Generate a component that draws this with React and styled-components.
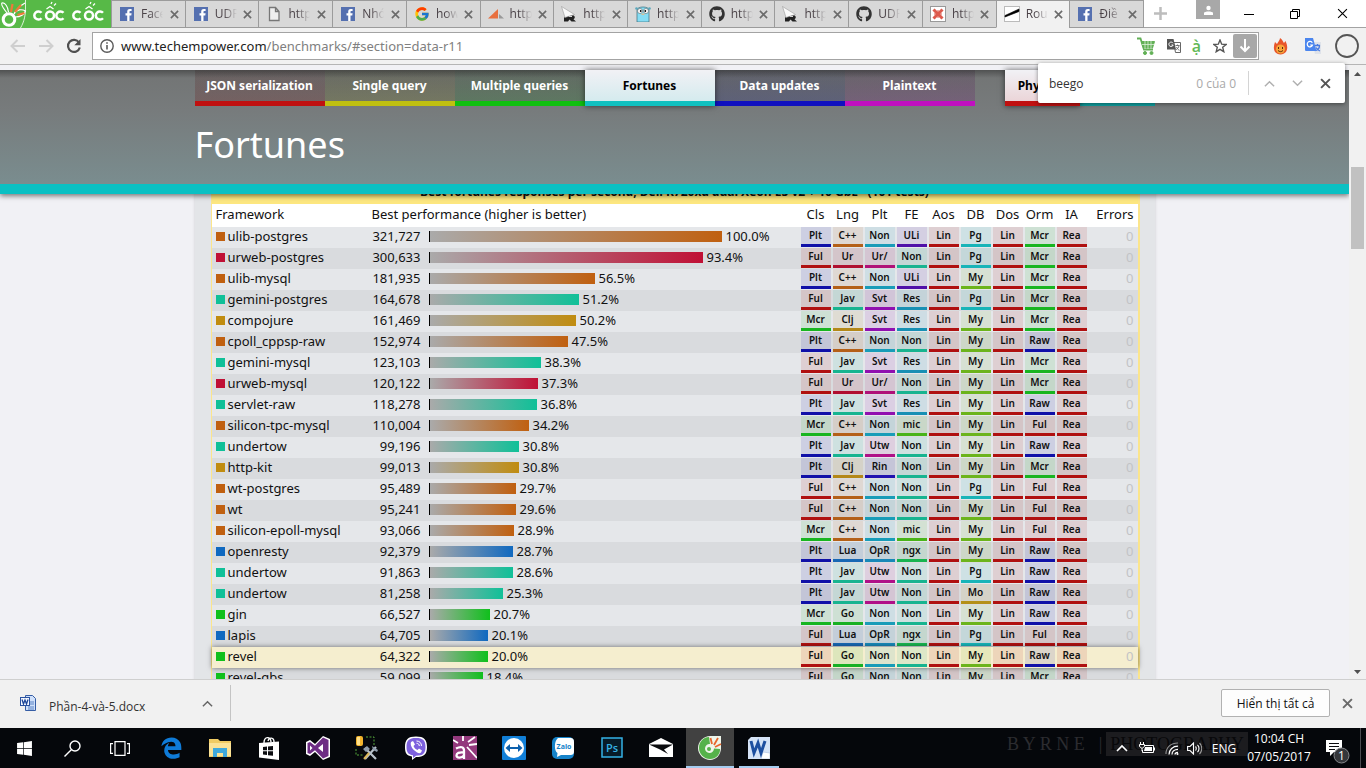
import React from "react";
import styled, { createGlobalStyle, css } from "styled-components";
import { FaGithub, FaWindows } from "react-icons/fa";
import { FcGoogle } from "react-icons/fc";

const UI = `"Open Sans", "Noto Sans", sans-serif`;
const PAGE = `"Noto Sans", "Open Sans", sans-serif`;

const GlobalStyle = createGlobalStyle`
  *, *::before, *::after { box-sizing: border-box; }
  body { margin: 0; overflow: hidden; font-family: ${UI}; }
  button, input { font: inherit; color: inherit; margin: 0; padding: 0; border: 0; background: none; }
  svg { display: block; flex: none; }
  a { text-decoration: none; color: inherit; }
`;

const Desktop = styled.div`
  height: 100vh;
  display: flex;
  flex-direction: column;
  background: #f1f1f1;
`;

/* ---------- tab strip ---------- */

const TabStrip = styled.div`
  display: flex;
  height: 28px;
  flex: none;
  background: #fff;
  box-shadow: inset 0 -1px 0 #a3a3a3;
`;

const Brand = styled.button`
  width: 111px;
  height: 28px;
  flex: none;
  display: block;
  background: #57b947;
`;

const TabList = styled.div`
  flex: 1;
  display: flex;
  min-width: 0;
`;

const Tab = styled.div`
  flex: 1 1 0;
  min-width: 0;
  display: flex;
  align-items: center;
  padding-left: 7px;
  border: solid #9b9b9b;
  border-width: 1px 0 1px 1px;
  background: ${(p) => (p.$active ? "#f1f1f1" : "#d8d8d8")};
  border-bottom-color: ${(p) => (p.$active ? "#f1f1f1" : "#9b9b9b")};
  &:last-child { border-right-width: 1px; }
`;

const TabTitle = styled.span`
  width: 22px;
  margin: 0 5px 0 6px;
  flex: none;
  overflow: hidden;
  white-space: nowrap;
  font-size: 12px;
  line-height: 20px;
  color: #4a4247;
  mask-image: linear-gradient(to right, #000 40%, transparent);
`;

const TabClose = styled.button`
  flex: none;
  width: 12px;
  height: 12px;
  display: grid;
  place-items: center;
`;

const WindowArea = styled.div`
  flex: none;
  width: 222px;
  display: flex;
  justify-content: space-between;
  height: 27px;
`;

const WindowButton = styled.button`
  width: ${(p) => p.$w || 46}px;
  height: 27px;
  display: grid;
  place-items: center;
`;

const ProfileButton = styled.button`
  width: 24px;
  height: 19px;
  margin-right: 6px;
  display: grid;
  place-items: center;
  background: #a8a8a8;
`;

const WindowGroup = styled.div`
  display: flex;
`;

/* ---------- toolbar ---------- */

const Toolbar = styled.div`
  position: relative;
  flex: none;
  display: flex;
  align-items: center;
  height: 37px;
  padding: 0 4px;
  border-bottom: 1px solid #b5b5b5;
  background: #f1f1f1;
`;

const IconButton = styled.button`
  width: 28px;
  height: 28px;
  flex: none;
  display: grid;
  place-items: center;
`;

const AddressBar = styled.div`
  flex: 1;
  min-width: 0;
  display: flex;
  align-items: center;
  height: 28px;
  margin-left: 4px;
  padding: 0 1px 0 7px;
  border: 1px solid #a3a3a3;
  background: #fff;
`;

const Url = styled.div`
  flex: 1;
  padding-left: 7px;
  font-family: ${PAGE};
  font-size: 13px;
  line-height: 20px;
  white-space: nowrap;
  color: #808080;
  b { font-weight: 400; color: #222; }
`;

const ActionButton = styled.button`
  width: ${(p) => p.$w}px;
  height: 24px;
  flex: none;
  display: grid;
  place-items: center;
  font-size: 16px;
  font-weight: 600;
  line-height: 20px;
  color: #62b856;
  border-radius: 2px;
  background: ${(p) => (p.$filled ? "#a8a8a8" : "none")};
`;

const ExtensionButton = styled.button`
  width: 32px;
  height: 28px;
  display: grid;
  place-items: center;
`;

const Extensions = styled.div`
  display: flex;
  align-items: center;
  gap: 1px;
  padding-left: 5px;
`;

const FindBar = styled.form`
  position: absolute;
  right: 21px;
  top: 35px;
  z-index: 5;
  display: flex;
  align-items: center;
  width: 307px;
  height: 40px;
  padding: 0 6px 0 11px;
  border-radius: 2px;
  background: #fff;
  box-shadow: 0 1px 4px rgba(0, 0, 0, 0.45);
  font-size: 12px;
`;

const FindInput = styled.input`
  flex: 1;
  min-width: 0;
  color: #333;
  outline: none;
`;

const FindCount = styled.span`
  color: #a9a9a9;
  padding-right: 12px;
`;

const FindDivider = styled.i`
  width: 1px;
  height: 24px;
  margin-right: 6px;
  background: #d4d4d4;
`;

/* ---------- benchmark page ---------- */

const Viewport = styled.div`
  flex: 1;
  min-height: 0;
  display: flex;
  overflow: hidden;
`;

const Page = styled.div`
  flex: 1;
  min-width: 0;
  overflow: hidden;
  background: #f1f1f5;
  font-family: ${PAGE};
  color: #111;
`;

const PageHeader = styled.header`
  position: relative;
  z-index: 2;
  height: 129px;
  border-top: 5px solid #f1f1f5;
  border-bottom: 10px solid #0bc0c3;
  background: linear-gradient(#727474, #777b7c 35%, #7a8d8f);
  box-shadow: 0 2px 5px rgba(0, 0, 0, 0.5);
  &::before {
    content: "";
    position: absolute;
    inset: 0 0 auto;
    height: 8px;
    z-index: 1;
    background: linear-gradient(rgba(0, 0, 0, 0.3), rgba(0, 0, 0, 0));
  }
`;

const Centered = styled.div`
  width: 960px;
  max-width: 100%;
  margin: 0 auto;
`;

const TestNav = styled.nav`
  display: flex;
`;

const TestTab = styled.a`
  position: relative;
  flex: 0 0 ${(p) => p.$w || 130}px;
  height: 36px;
  overflow: hidden;
  text-align: center;
  font-size: 12px;
  font-weight: 700;
  line-height: 31px;
  color: #fff;
  white-space: nowrap;
  border-bottom: 5px solid ${(p) => p.$c};
  background: linear-gradient(${(p) => p.$c}08, ${(p) => p.$c}20), linear-gradient(#0000001c, #0000001c);
  background-clip: padding-box;
  margin-left: ${(p) => (p.$gap ? 30 : 0)}px;
  ${(p) =>
    p.$active &&
    css`
      z-index: 2;
      color: #000;
      background: linear-gradient(${p.$c}00, ${p.$c}20), #f1f1f5;
      box-shadow: 0 0 6px rgba(0, 0, 0, 0.6);
    `}
`;

const Title = styled.h1`
  margin: 0;
  padding-top: 12px;
  font-size: 36px;
  font-weight: 400;
  line-height: 54px;
  color: #fff;
`;

const Panel = styled(Centered)`
  padding: 0 15px 0 16px;
  background: #e3e5e8;
  box-shadow: 0 0 3px rgba(0, 0, 0, 0.15);
`;

const ResultBox = styled.div`
  margin-top: -16px;
  border: 2px solid #fbe58c;
  border-width: 2px 2px 2px 1px;
`;

const Table = styled.table`
  width: 100%;
  table-layout: fixed;
  border-collapse: separate;
  border-spacing: 0;
  font-size: 13px;
  line-height: 19px;
`;

const Caption = styled.caption`
  background: #fde780;
  font-size: 12px;
  font-weight: 700;
  line-height: 24px;
  white-space: nowrap;
`;

const Th = styled.th`
  height: 23px;
  padding: ${(p) => (p.$tag ? "0 0 2px" : "0 4px 2px")};
  background: #fff;
  font-weight: 400;
  white-space: nowrap;
  text-align: ${(p) => p.$align || "left"};
`;

const Row = styled.tr`
  background: #e5e7ea;
  &:nth-child(even) { background: #d9dbde; }
  ${(p) =>
    p.$marked &&
    css`
      && {
        position: relative;
        z-index: 1;
        background: #f5eecf;
        box-shadow: 0 0 5px rgba(0, 0, 0, 0.5);
      }
    `}
`;

const Td = styled.td`
  height: 21px;
  padding: 0 4px 2px;
  white-space: nowrap;
  text-align: ${(p) => p.$align || "left"};
`;

const FrameworkName = styled.span`
  display: flex;
  align-items: center;
  gap: 3px;
  &::before {
    content: "";
    width: 9px;
    height: 9px;
    background: ${(p) => p.$c};
  }
`;

const BarLine = styled.div`
  display: flex;
  align-items: center;
  gap: 4px;
`;

const Bar = styled.div`
  height: 11px;
  border-left: 1px solid #000;
  background: linear-gradient(to right, #aaa, ${(p) => p.$c});
`;

const TagCell = styled.td`
  padding: 0 1px 1px;
`;

const Tag = styled.span`
  display: block;
  height: 20px;
  border-bottom: 3px solid ${(p) => p.$c};
  background: ${(p) => p.$c}1c;
  background-clip: padding-box;
  text-align: center;
  font-size: 10px;
  font-weight: 600;
  line-height: 17px;
`;

const Errors = styled(Td)`
  color: #c2c3c6;
`;

const Scrollbar = styled.div`
  flex: none;
  width: 17px;
  display: flex;
  flex-direction: column;
  align-items: center;
  justify-content: space-between;
  padding: 7px 0 5px;
  background: #f1f1f1;
`;

const Thumb = styled.div`
  width: 13px;
  height: 82px;
  margin: 91px 0 auto;
  background: #c1c1c1;
`;

/* ---------- download shelf ---------- */

const Shelf = styled.div`
  flex: none;
  display: flex;
  align-items: center;
  height: 49px;
  padding: 0 5px 2px 0;
  border-top: 1px solid #cfcfcf;
  background: #f1f1f1;
  font-size: 12px;
  color: #333;
`;

const DownloadItem = styled.div`
  width: 231px;
  height: 36px;
  display: flex;
  align-items: center;
  padding: 0 9px 0 20px;
  border-right: 1px solid #c4c4c4;
`;

const DownloadName = styled.span`
  flex: 1;
  padding: 6px 0 0 13px;
`;

const ShowAll = styled.button`
  width: 109px;
  height: 28px;
  margin: 0 3px 0 auto;
  border: 1px solid #b1b1b1;
  border-radius: 2px;
  background: #fdfdfd;
  color: #111;
`;

/* ---------- taskbar ---------- */

const Taskbar = styled.div`
  position: relative;
  flex: none;
  display: flex;
  height: 40px;
  background: #05070b;
  color: #fff;
`;

const AppList = styled.div`
  display: flex;
  gap: 1px;
  padding-left: 3px;
`;

const TaskButton = styled.button`
  position: relative;
  width: 48px;
  height: 40px;
  display: grid;
  place-items: center;
  background: ${(p) => (p.$focused ? "#414141" : "none")};
  ${(p) =>
    p.$running &&
    css`
      &::after {
        content: "";
        position: absolute;
        inset: auto ${p.$focused ? 0 : 4}px 0;
        height: 2px;
        background: #a5ccf0;
      }
    `}
`;

const Watermark = styled.div`
  position: absolute;
  right: 118px;
  top: 4px;
  display: flex;
  align-items: center;
  gap: 14px;
  font-family: "Liberation Serif", serif;
  font-size: 18px;
  line-height: 24px;
  color: #2c2c30;
`;

const WatermarkBox = styled.span`
  padding: 0 4px;
  margin-left: -10px;
  background: #1c1c1f;
  color: #08080a;
`;

const Tray = styled.div`
  position: relative;
  margin-left: auto;
  display: flex;
  align-items: center;
  font-size: 12px;
`;

const TrayButton = styled.button`
  width: ${(p) => p.$w}px;
  height: 40px;
  display: grid;
  place-items: center;
`;

const Clock = styled.button`
  width: 70px;
  text-align: center;
  font-size: 12px;
  line-height: 18px;
`;

const ShowDesktop = styled.button`
  width: 6px;
  height: 40px;
  border-left: 1px solid #4b4b50;
`;

/* ---------- icons ---------- */

const Facebook = () => (
  <svg width="16" height="16" viewBox="0 0 16 16">
    <rect x="1" y="1" width="14" height="14" fill="#5570b0" />
    <path d="M8.2 15V9.4H6.5V7.2h1.7V5.5C8.2 3.8 9.3 3 10.8 3h1.8v2.1h-1.2c-.7 0-.9.3-.9.9v1.2h2.1l-.3 2.2h-1.8V15z" fill="#fff" />
  </svg>
);
const Doc = () => (
  <svg width="16" height="16" viewBox="0 0 16 16" fill="none" stroke="#777" strokeWidth="1.3">
    <path d="M3.5 1.5h6l3.5 4v9h-9.5zM9.5 1.5v4H13" fill="#eee" />
  </svg>
);
const Sail = () => (
  <svg width="16" height="16" viewBox="0 0 16 16">
    <path d="M0 12.5L10 3v9.500z" fill="#e8703f" />
    <path d="M11 8l5 4.500h-5z" fill="#999" />
  </svg>
);
const Router = () => (
  <svg width="16" height="16" viewBox="0 0 16 16">
    <path d="M3 12l2-3h5.500c4 0 4 3.500 2 4.200l2.500 2.300h-4.500L8.500 13.500 7 15.500H3z" fill="#222" />
    <path d="M8 10.500h3" stroke="#ddd" />
    <path d="M.5.5l13 8L4 11.500z" fill="#fafafa" stroke="#999" strokeWidth=".6" />
  </svg>
);
const Gopher = () => (
  <svg width="16" height="16" viewBox="0 0 16 16">
    <path d="M2 16V4c0-4 12-4 12 0v12z" fill="#86ddf4" stroke="#3b6b7a" strokeWidth=".7" />
    <circle cx="1.500" cy="2.500" r="1.300" fill="#5ba9bd" />
    <circle cx="14.500" cy="2.500" r="1.300" fill="#5ba9bd" />
    <circle cx="5" cy="5" r="2.500" fill="#fff" stroke="#444" strokeWidth=".5" />
    <circle cx="11" cy="5" r="2.500" fill="#fff" stroke="#444" strokeWidth=".5" />
    <circle cx="5.700" cy="5" r=".9" />
    <circle cx="10.300" cy="5" r=".9" />
    <path d="M6.500 7.500h3v1.500h-3z" fill="#d9bd94" />
  </svg>
);
const RedX = () => (
  <svg width="16" height="16" viewBox="0 0 16 16">
    <rect x=".5" y=".5" width="15" height="15" fill="#fff" stroke="#999" />
    <path d="M3.500 3.500l9 9m0-9l-9 9" stroke="#dd5a4d" strokeWidth="3" />
    <path d="M4 8h8M8 4v8" stroke="#dd5a4d" strokeWidth="1" />
  </svg>
);
const Slash = () => (
  <svg width="16" height="16" viewBox="0 0 16 16">
    <rect x=".5" y=".5" width="15" height="15" fill="#fff" stroke="#bbb" />
    <path d="M1 9.500L15 3v2.500L1 11z" fill="#000" stroke="#000" strokeWidth=".6" />
  </svg>
);
const Github = () => <FaGithub size={16} color="#333" />;
const Google = () => <FcGoogle size={16} />;

const Cross = ({ s = 9, c = "#6b6b6b", w = 1.8 }) => (
  <svg width={s} height={s} viewBox="0 0 10 10" stroke={c} strokeWidth={w}>
    <path d="M1 1l8 8M9 1L1 9" />
  </svg>
);
const Chevron = ({ up, c = "#8c8c8c", s = 11 }) => (
  <svg width={s} height={s} viewBox="0 0 12 12" fill="none" stroke={c} strokeWidth="1.6">
    <path d={up ? "M1 9l5-5 5 5" : "M1 3l5 5 5-5"} />
  </svg>
);
const ArrowIcon = ({ right }) => (
  <svg width="16" height="16" viewBox="0 0 16 16" fill="none" stroke="#cfcfcf" strokeWidth="2">
    <path d={right ? "M1 8h13M8.500 2l6 6-6 6" : "M15 8H2M7.500 2l-6 6 6 6"} />
  </svg>
);
const Triangle = ({ up }) => (
  <svg width="7" height="4" viewBox="0 0 7 4">
    <path d={up ? "M0 4l3.500-4L7 4z" : "M0 0l3.500 4L7 0z"} fill="#505050" />
  </svg>
);

const BrandMark = () => (
  <svg width="111" height="28" viewBox="0 0 111 28" fill="none" stroke="#fff">
    <circle cx="9" cy="19.500" r="5.800" strokeWidth="3" />
    <path d="M14 14C16 9 22 9 25.500 11c-1 3-5 6-10 6" strokeWidth="1.200" />
    <path d="M7 13C3 8 1 4 2 3c3-1 6 4 6.500 9" strokeWidth="1.200" />
    <path d="M25 3c-5 3-8 6-9.500 9" strokeWidth="1.200" />
    <path d="M25.500 0v7c0 8-1 14-5 21" strokeWidth=".8" />
    <path d="M12.500 4l-1.500 8M21 5l-6 7M24.500 13l-7 2" stroke="#ee7a3a" strokeWidth="2.200" />
    <g strokeWidth="2.500">
      <path d="M41.500 12.800a4.100 4.100 0 1 0 0 5.400" />
      <circle cx="50" cy="15.500" r="4" />
      <path d="M63.500 12.800a4.100 4.100 0 1 0 0 5.400" />
      <path d="M80.500 12.800a4.100 4.100 0 1 0 0 5.400" />
      <circle cx="89" cy="15.500" r="4" />
      <path d="M103 12.800a4.100 4.100 0 1 0 0 5.400" />
    </g>
    <path d="M46.500 9l3.500-2.500 3.500 2.500M51 4l1-2M54 5.500l2-2M85.500 9l3.500-2.500 3.500 2.500M90 4l1-2M93 5.500l2-2" strokeWidth="1.300" />
  </svg>
);

const WordDoc = () => (
  <svg width="16" height="16" viewBox="0 0 16 16">
    <path d="M5.500.5h7l3 3v12h-10z" fill="#cfe0fa" stroke="#355da5" />
    <path d="M10 7h4M10 9h4M8 12h6M8 14h6" stroke="#5b83c4" />
    <rect x=".5" y="2.500" width="9" height="8" fill="#f4f8ff" stroke="#2a52a0" />
    <path d="M2 4.500l1.500 4.500L5 5l1.500 4L8 4.500" fill="none" stroke="#1e4799" strokeWidth="1.300" />
  </svg>
);

const TABS = [
  [Facebook, "Face"],
  [Facebook, "UDP"],
  [Doc, "http"],
  [Facebook, "Nhó"],
  [Google, "how"],
  [Sail, "http"],
  [Router, "http"],
  [Gopher, "http"],
  [Github, "http"],
  [Router, "http"],
  [Github, "UDP"],
  [RedX, "http"],
  [Slash, "Rou", true],
  [Facebook, "Điề"],
];

const TASK_APPS = [
  [
    "Edge",
    <svg width="21" height="22" viewBox="0 0 24 24">
      <path
        d="M.481 10.004C1.221 4.134 5.231.031 12.161 0c4.180.082 7.620 1.974 9.660 5.571 1.030 1.878 1.350 3.853 1.420 6.030v2.550H8.005c.070 6.286 9.252 6.070 13.200 3.302v5.120c-2.310 1.386-7.558 2.627-11.620 1.030-3.460-1.300-5.922-4.925-5.910-8.406-.110-4.512 2.243-7.500 5.910-9.202-.778.963-1.370 2.025-1.678 3.866h8.605s.503-5.142-4.870-5.142C6.577 4.890 2.920 7.840.481 10.004z"
        fill="#0f7bd8"
      />
    </svg>,
  ],
  [
    "File Explorer",
    <svg width="22" height="20" viewBox="0 0 22 20">
      <path d="M0 1h9l2 2h11v16H0z" fill="#f0cb63" />
      <path d="M0 5h22v13H0z" fill="#fbe296" />
      <path d="M4 19V10h14v9h-4v-4H8v4z" fill="#3fa9dc" />
    </svg>,
  ],
  [
    "Store",
    <svg width="22" height="24" viewBox="0 0 22 24">
      <path d="M1 7l20-1.500V24L1 21.500z" fill="#fff" />
      <path d="M6 7C6 0 13 0 13 6M10 5c1-4 6-4 6 1" fill="none" stroke="#fff" strokeWidth="1.400" />
      <path d="M5 11l4-.4v3.700H5zM10 10.500l5-.5v4.300h-5zM5 15.300h4V19l-4-.5zM10 15.300h5v4.500l-5-.6z" fill="#0b0c10" />
    </svg>,
  ],
  [
    "Visual Studio",
    <svg width="24" height="24" viewBox="0 0 24 24">
      <path d="M17 0l7 3v18l-7 3-8-8-5 4-4-2V6l4-2 5 4z" fill="#fff" />
      <path d="M17 1.500l5.500 2.500v16L17 22.500 9 14.300 4 18l-2.500-1V7L4 6l5 3.700zM17 8l-5 4 5 4zM4 9.500v5L6.500 12z" fill="#6d2c84" fillRule="evenodd" />
    </svg>,
  ],
  [
    "SQL tools",
    <svg width="24" height="24" viewBox="0 0 24 24">
      <rect x="1" y="0" width="7" height="10" rx="2" fill="#f2b32c" />
      <rect x="2" y="1" width="3" height="8" fill="#ffe08a" />
      <path d="M11 1h8v9M1 13v6h7" fill="none" stroke="#55a63a" strokeDasharray="2 1.500" />
      <path d="M10 12l11 11M21 11L10 23" stroke="#b9c2cc" strokeWidth="2.200" />
      <path d="M8 13l4-3 3 3-4 3zM17 10l6 4-1 2-4-2z" fill="#8e9cab" />
      <path d="M9 23l5-6" stroke="#d9b65a" strokeWidth="2" />
    </svg>,
  ],
  [
    "Viber",
    <svg width="24" height="24" viewBox="0 0 24 24">
      <path d="M12 .5c8 0 11 3 11 10.500S20 21 12 21l-4 3v-3.500C2.500 19.500 1 17 1 11 1 3.500 4 .5 12 .5z" fill="#fff" />
      <path d="M12 2c7 0 9.500 2.500 9.500 9s-2.500 8.700-9.500 8.700L9 22v-2.700C4 18.500 2.500 16 2.500 11 2.500 4.500 5 2 12 2z" fill="#7d61de" />
      <path d="M7 6l2-1 2 3.500-1.500 1.500c.7 2 2 3.200 4 4L15 12.500l3 2-1 2c-1.500 1.500-4 .2-6.500-2S6 9 7 6z" fill="#fff" />
      <path d="M12.500 5c3 0 5 2 5 5M12.500 7.300c1.800 0 2.800 1 2.800 2.700" fill="none" stroke="#fff" />
    </svg>,
  ],
  [
    "Art app",
    <svg width="24" height="24" viewBox="0 0 24 24">
      <rect width="24" height="24" fill="#93397c" />
      <path d="M3 12.500c5-2.500 8-1.500 8 2V23M11 16.500c-5-.5-7.500.5-7.500 3s5 3 7.500 0" fill="none" stroke="#fff" strokeWidth="2.300" />
      <path d="M10 0v5M0 4l5 3M22 1l-7 5M24 8l-8 1M14 11l10 11" stroke="#fff" strokeWidth="1.800" />
    </svg>,
  ],
  [
    "TeamViewer",
    <svg width="24" height="24" viewBox="0 0 24 24">
      <rect width="24" height="24" rx="1" fill="#117fd8" />
      <circle cx="12" cy="12" r="10" fill="#fff" />
      <path d="M3.500 12L8 8v3h8V8l4.500 4L16 16v-3H8v3z" fill="#0d60ad" />
    </svg>,
  ],
  [
    "Zalo",
    <svg width="24" height="24" viewBox="0 0 24 24">
      <rect x="1" y="1" width="22" height="22" rx="5" fill="#1683c9" />
      <path d="M7 2h12c3 0 4 1 4 4v9c0 3-1 4-4 4h-9l-4 2 .500-4C3 15 3 5 7 2z" fill="#fff" />
      <text x="13" y="13" textAnchor="middle" fontSize="7" fontWeight="700" fill="#1683c9">Zalo</text>
    </svg>,
  ],
  [
    "Photoshop",
    <svg width="22" height="22" viewBox="0 0 22 22">
      <rect x="1" y="1" width="20" height="19" fill="#071b28" stroke="#35b2e6" strokeWidth="1.500" />
      <text x="11" y="15" textAnchor="middle" fontSize="11" fontWeight="600" fill="#35b2e6">Ps</text>
    </svg>,
  ],
  [
    "Mail",
    <svg width="24" height="20" viewBox="0 0 24 20">
      <path d="M0 6l12-6 12 6v13H0z" fill="#fff" />
      <path d="M0 6.500l24 0-9 5 4 4.500-8-4.500z" fill="#0a0b0e" />
    </svg>,
  ],
  [
    "Cốc Cốc",
    <svg width="24" height="24" viewBox="0 0 24 24">
      <path d="M12 0h11v12C23 19 18 24 12 24S0 19 0 12 6 0 12 0z" fill="#eef5ea" />
      <path d="M11 1C5 1.500 1 6 1 12c0 6 5 11 11 11s10.500-5 10-10l-6-.5a4.500 4.500 0 1 1-4-4.500z" fill="#55b24a" />
      <circle cx="11" cy="13" r="2" fill="#55b24a" />
      <path d="M12.500 2l1.500 6M20 2l-4 7M23 8l-6 3" stroke="#e8662d" strokeWidth="1.800" />
    </svg>,
    { $focused: true, $running: true },
  ],
  [
    "Word",
    <svg width="22" height="22" viewBox="0 0 22 22">
      <path d="M3 0h19v22H0V3z" fill="#d5e3f7" />
      <path d="M15 15l7 1v6h-9z" fill="#fff" stroke="#a9bedf" strokeWidth=".6" />
      <path d="M3 4l3 12 4-10 3 10L17 4" fill="none" stroke="#1d4fa0" strokeWidth="3" />
    </svg>,
    { $running: true },
  ],
];

/* ---------- data ---------- */

const RED = "#b01010";
const GREEN = "#18b520";
const BLUE = "#1010a8";

const LANG_COLORS = { "C++": "#c06010", Ur: "#c01035", Jav: "#10c098", Clj: "#c08c10", Lua: "#1069c0", Go: "#10c01c" };

const COLUMNS = [
  ["Cls", { Plt: BLUE, Ful: RED, Mcr: GREEN }],
  ["Lng", { "C++": "#b46018", Ur: "#b01030", Jav: "#18b490", Clj: "#b48818", Lua: "#1868b4", Go: "#18b024" }],
  ["Plt", { Non: "#189cb8", "Ur/": "#b01078", Svt: "#9010b0", Utw: "#b01088", Rin: "#2010b0", OpR: "#1888b8" }],
  ["FE", { ULi: "#5010a8", Non: "#18b490", Res: "#1890b4", mic: "#48b418", ngx: "#18b450" }],
  ["Aos", { Lin: RED }],
  ["DB", { Pg: "#18b4b8", My: "#6cb41c", Mo: "#b49018" }],
  ["Dos", { Lin: RED }],
  ["Orm", { Mcr: GREEN, Raw: BLUE, Ful: RED }],
  ["IA", { Rea: RED }],
];

const RESULTS = [
  ["ulib-postgres", "321,727", "100.0", "Plt C++ Non ULi Pg Mcr"],
  ["urweb-postgres", "300,633", "93.4", "Ful Ur Ur/ Non Pg Mcr"],
  ["ulib-mysql", "181,935", "56.5", "Plt C++ Non ULi My Mcr"],
  ["gemini-postgres", "164,678", "51.2", "Ful Jav Svt Res Pg Mcr"],
  ["compojure", "161,469", "50.2", "Mcr Clj Svt Res My Mcr"],
  ["cpoll_cppsp-raw", "152,974", "47.5", "Plt C++ Non Non My Raw"],
  ["gemini-mysql", "123,103", "38.3", "Ful Jav Svt Res My Mcr"],
  ["urweb-mysql", "120,122", "37.3", "Ful Ur Ur/ Non My Mcr"],
  ["servlet-raw", "118,278", "36.8", "Plt Jav Svt Res My Raw"],
  ["silicon-tpc-mysql", "110,004", "34.2", "Mcr C++ Non mic My Ful"],
  ["undertow", "99,196", "30.8", "Plt Jav Utw Non My Raw"],
  ["http-kit", "99,013", "30.8", "Plt Clj Rin Non My Mcr"],
  ["wt-postgres", "95,489", "29.7", "Ful C++ Non Non Pg Ful"],
  ["wt", "95,241", "29.6", "Ful C++ Non Non My Ful"],
  ["silicon-epoll-mysql", "93,066", "28.9", "Mcr C++ Non mic My Ful"],
  ["openresty", "92,379", "28.7", "Plt Lua OpR ngx My Raw"],
  ["undertow", "91,863", "28.6", "Plt Jav Utw Non Pg Raw"],
  ["undertow", "81,258", "25.3", "Plt Jav Utw Non Mo Raw"],
  ["gin", "66,527", "20.7", "Mcr Go Non Non My Raw"],
  ["lapis", "64,705", "20.1", "Ful Lua OpR ngx Pg Ful"],
  ["revel", "64,322", "20.0", "Ful Go Non Non My Raw", true],
  ["revel-qbs", "59,099", "18.4", "Ful Go Non Non My Mcr"],
];

const MAX_BAR = 293;

function ResultRow({ data }) {
  const [name, score, pct, attrs, marked] = data;
  const [cls, lng, plt, fe, db, orm] = attrs.split(" ");
  const tags = [cls, lng, plt, fe, "Lin", db, "Lin", orm, "Rea"];
  const color = LANG_COLORS[lng];
  return (
    <Row $marked={marked}>
      <Td>
        <FrameworkName $c={color}>{name}</FrameworkName>
      </Td>
      <Td $align="right">{score}</Td>
      <Td>
        <BarLine>
          <Bar $c={color} style={{ width: Math.round((MAX_BAR * pct) / 100) }} />
          {pct}%
        </BarLine>
      </Td>
      {tags.map((t, i) => (
        <TagCell key={i}>
          <Tag $c={COLUMNS[i][1][t]}>{t}</Tag>
        </TagCell>
      ))}
      <Errors $align="right">0</Errors>
    </Row>
  );
}

export default function App() {
  return (
    <Desktop>
      <GlobalStyle />
      <TabStrip>
        <Brand aria-label="Cốc Cốc">
          <BrandMark />
        </Brand>
        <TabList>
          {TABS.map(([Icon, title, active], i) => (
            <Tab key={i} $active={active}>
              <Icon />
              <TabTitle>{title}</TabTitle>
              <TabClose aria-label="Close tab">
                <Cross />
              </TabClose>
            </Tab>
          ))}
        </TabList>
        <WindowArea>
          <WindowButton $w={32} aria-label="New tab">
            <svg width="13" height="13" viewBox="0 0 13 13" stroke="#bdbdbd" strokeWidth="2.500">
              <path d="M6.500 0v13M0 6.500h13" />
            </svg>
          </WindowButton>
          <WindowGroup>
            <ProfileButton aria-label="Profile">
              <svg width="9" height="10" viewBox="0 0 9 10" fill="#fff">
                <circle cx="4.500" cy="3" r="2.200" />
                <path d="M0 10V8c0-2 9-2 9 0v2z" />
              </svg>
            </ProfileButton>
            <WindowButton aria-label="Minimize">
              <svg width="10" height="10" viewBox="0 0 10 10" stroke="#000">
                <path d="M0 5.500h10" />
              </svg>
            </WindowButton>
            <WindowButton aria-label="Restore">
              <svg width="10" height="10" viewBox="0 0 10 10" fill="none" stroke="#000">
                <path d="M.5 2.500h7v7h-7zM2.500 2.500v-2h7v7h-2" />
              </svg>
            </WindowButton>
            <WindowButton $w={48} aria-label="Close">
              <Cross s={11} c="#000" w={1} />
            </WindowButton>
          </WindowGroup>
        </WindowArea>
      </TabStrip>

      <Toolbar>
        <IconButton aria-label="Back">
          <ArrowIcon />
        </IconButton>
        <IconButton aria-label="Forward">
          <ArrowIcon right />
        </IconButton>
        <IconButton aria-label="Reload">
          <svg width="16" height="16" viewBox="0 0 16 16" fill="none" stroke="#505050" strokeWidth="2.200">
            <path d="M13 4.500A6 6 0 1 0 13.800 9.500" />
            <path d="M14.500 1v6.200H8.300z" fill="#505050" stroke="none" />
          </svg>
        </IconButton>
        <AddressBar>
          <svg width="14" height="14" viewBox="0 0 14 14" fill="none" stroke="#5a5a5a" strokeWidth="1.400">
            <circle cx="7" cy="7" r="6.200" />
            <path d="M7 6v4.500M7 3.300v1.500" strokeWidth="1.600" />
          </svg>
          <Url>
            <b>www.techempower.com</b>/benchmarks/#section=data-r11
          </Url>
          <ActionButton $w={30} aria-label="Shopping">
            <svg width="18" height="18" viewBox="0 0 18 18" fill="none" stroke="#62b056">
              <path d="M0 1.500h3.500L7 12.500h9" strokeWidth="1.800" />
              <path d="M4.500 4.500h13L15.500 11H6.500z" fill="#62b056" />
              <path d="M8 4v8M11 4v8M14 4v8M5 7.500h12" stroke="#dcefd8" strokeWidth=".8" />
              <circle cx="8" cy="16" r="1.500" fill="#62b056" />
              <circle cx="14.500" cy="16" r="1.500" fill="#62b056" />
            </svg>
          </ActionButton>
          <ActionButton $w={25} aria-label="Translate page">
            <svg width="14" height="14" viewBox="0 0 14 14">
              <path d="M6.500 3.500h7v10h-5z" fill="#fff" stroke="#666" />
              <path d="M8.500 6.500h4M10.500 5.500v1M12 6.500c0 2-2 4-3.500 4.500M9.500 8c.5 1.500 2 3 3 3.300" fill="none" stroke="#666" strokeWidth=".9" />
              <path d="M0 0h6.500l2.500 10.500H0z" fill="#555" />
              <path d="M6 4.200A2.200 2.200 0 1 0 6.200 6H4.500" fill="none" stroke="#fff" strokeWidth="1" />
            </svg>
          </ActionButton>
          <ActionButton $w={21} aria-label="Vietnamese spelling">
            ạ̀
          </ActionButton>
          <ActionButton $w={26} aria-label="Bookmark">
            <svg width="14" height="14" viewBox="0 0 14 14" fill="none" stroke="#555" strokeWidth="1.400">
              <path d="M7 1l1.700 4.200 4.400.3-3.400 2.800 1.100 4.400L7 10.300l-3.800 2.400 1.100-4.400L.9 5.500l4.400-.3z" />
            </svg>
          </ActionButton>
          <ActionButton $w={24} $filled aria-label="Download">
            <svg width="12" height="14" viewBox="0 0 12 14" fill="none" stroke="#fff" strokeWidth="2">
              <path d="M6 0v12M1.500 7.500L6 12l4.500-4.500" />
            </svg>
          </ActionButton>
        </AddressBar>
        <Extensions>
          <ExtensionButton aria-label="Fire extension">
            <svg width="15" height="17" viewBox="0 0 15 17">
              <path d="M7 0c3 2 3 4 4 5l1.500-2c3 6 2.500 13-5 13.500C0 16 0 9 2 4l2 2c1-2 3-4 3-6z" fill="#e8562a" />
              <circle cx="7.500" cy="11" r="4.500" fill="#f7a63a" />
              <path d="M5.500 9v2M9.500 9v2M5 12.500c1.500 1.500 3.500 1.500 5 0" stroke="#5c2a12" fill="none" />
            </svg>
          </ExtensionButton>
          <ExtensionButton aria-label="Google Translate">
            <svg width="17" height="16" viewBox="0 0 17 16">
              <path d="M7 4h9v12h-6z" fill="#dfe3ea" />
              <path d="M10 7.500h5M12.500 6v1.500M14.500 7.500c0 2.500-2 4.500-4 5M11 9.500c1 2 2.500 3 4 3.500" fill="none" stroke="#4a7be0" strokeWidth="1.300" />
              <path d="M0 0h8l3.500 13H1.500C.5 13 0 12.500 0 11.500z" fill="#4b86ee" />
              <path d="M7.300 4.800A2.700 2.700 0 1 0 7.500 7H5.200" fill="none" stroke="#fff" strokeWidth="1.200" />
            </svg>
          </ExtensionButton>
          <ExtensionButton aria-label="Menu">
            <svg width="26" height="24" viewBox="0 0 26 24" fill="none" stroke="#555" strokeWidth="1.800">
              <circle cx="14" cy="12" r="11" />
            </svg>
          </ExtensionButton>
        </Extensions>

        <FindBar onSubmit={(e) => e.preventDefault()}>
          <FindInput aria-label="Find in page" defaultValue="beego" />
          <FindCount>0 của 0</FindCount>
          <FindDivider />
          <IconButton type="button" aria-label="Previous match">
            <Chevron up c="#b0b0b0" />
          </IconButton>
          <IconButton type="button" aria-label="Next match">
            <Chevron c="#b0b0b0" />
          </IconButton>
          <IconButton type="button" aria-label="Close find bar">
            <Cross s={11} c="#555" />
          </IconButton>
        </FindBar>
      </Toolbar>

      <Viewport>
        <Page>
          <PageHeader>
            <Centered>
              <TestNav>
                <TestTab href="#json" $c="#c01010">JSON serialization</TestTab>
                <TestTab href="#db" $c="#c0c010">Single query</TestTab>
                <TestTab href="#query" $c="#10c010">Multiple queries</TestTab>
                <TestTab href="#fortune" $c="#10c0c0" $active>Fortunes</TestTab>
                <TestTab href="#update" $c="#1010c0">Data updates</TestTab>
                <TestTab href="#plaintext" $c="#c010c0">Plaintext</TestTab>
                <TestTab href="#physical" $c="#c01010" $w={75} $gap $active>Physical</TestTab>
                <TestTab href="#cloud" $c="#10a0a0" $w={75}>Cloud</TestTab>
              </TestNav>
              <Title>Fortunes</Title>
            </Centered>
          </PageHeader>
          <Panel>
            <ResultBox>
              <Table>
                <Caption>Best fortunes responses per second, Dell R720xd dual Xeon E5 v2 + 10 GbE &nbsp; (101 tests)</Caption>
                <colgroup>
                  <col width="156" />
                  <col width="57" />
                  <col />
                  {COLUMNS.map(([label]) => (
                    <col key={label} width="32" />
                  ))}
                  <col width="50" />
                </colgroup>
                <thead>
                  <tr>
                    <Th scope="col">Framework</Th>
                    <Th scope="col" colSpan={2}>Best performance (higher is better)</Th>
                    {COLUMNS.map(([label]) => (
                      <Th key={label} scope="col" $tag $align="center">{label}</Th>
                    ))}
                    <Th scope="col" $align="right">Errors</Th>
                  </tr>
                </thead>
                <tbody>
                  {RESULTS.map((r, i) => (
                    <ResultRow key={i} data={r} />
                  ))}
                </tbody>
              </Table>
            </ResultBox>
          </Panel>
        </Page>
        <Scrollbar>
          <Triangle up />
          <Thumb />
          <Triangle />
        </Scrollbar>
      </Viewport>

      <Shelf>
        <DownloadItem>
          <WordDoc />
          <DownloadName>Phần-4-và-5.docx</DownloadName>
          <IconButton aria-label="Download options">
            <Chevron up c="#666" />
          </IconButton>
        </DownloadItem>
        <ShowAll>Hiển thị tất cả</ShowAll>
        <IconButton aria-label="Close downloads">
          <Cross s={11} />
        </IconButton>
      </Shelf>

      <Taskbar>
        <TaskButton aria-label="Start">
          <FaWindows size={17} />
        </TaskButton>
        <TaskButton aria-label="Search">
          <svg width="17" height="17" viewBox="0 0 17 17" fill="none" stroke="#fff" strokeWidth="1.400">
            <circle cx="11" cy="6" r="5" />
            <path d="M7.300 9.700L.5 16.500" />
          </svg>
        </TaskButton>
        <TaskButton aria-label="Task view">
          <svg width="20" height="15" viewBox="0 0 20 15" fill="none" stroke="#fff" strokeWidth="1.200">
            <path d="M5 .6h10v13.800H5zM3 2.600H.6v9.800H3M17 2.600h2.400v9.800H17" />
          </svg>
        </TaskButton>
        <AppList>
          {TASK_APPS.map(([label, icon, state]) => (
            <TaskButton key={label} aria-label={label} {...state}>
              {icon}
            </TaskButton>
          ))}
        </AppList>
        <Watermark aria-hidden="true">
          <span>B Y R N E</span>
          <span>|</span>
          <WatermarkBox>PHOTOGRAPHY</WatermarkBox>
        </Watermark>
        <Tray>
          <TrayButton $w={24} aria-label="Show hidden icons">
            <Chevron up c="#fff" s={12} />
          </TrayButton>
          <TrayButton $w={26} aria-label="Battery">
            <svg width="16" height="12" viewBox="0 0 16 12" fill="none" stroke="#fff">
              <path d="M5.500 3.500h9v7h-11V8M15.500 5.500v3" />
              <path d="M6 5h7v4H5z" fill="#fff" stroke="none" />
              <path d="M1.500 0v2M4.500 0v2M.5 2.500h5v2l-2 1.500h-1l-2-1.500zM3 6v3" />
            </svg>
          </TrayButton>
          <TrayButton $w={24} aria-label="Network">
            <svg width="14" height="13" viewBox="0 0 14 13" fill="none" stroke="#fff" strokeWidth="1.200">
              <path d="M1 12C1 5 6 1 13 1" stroke="#8b8b8b" />
              <path d="M4 12.500c0-5 4-8.300 9-8.300M7 12.500c0-3 2.500-5.200 6-5.200M10 12.500c0-1.300 1.300-2.200 3-2.200" />
              <circle cx="12.500" cy="12" r="1" fill="#fff" stroke="none" />
            </svg>
          </TrayButton>
          <TrayButton $w={20} aria-label="Volume">
            <svg width="15" height="13" viewBox="0 0 15 13" fill="none" stroke="#fff" strokeWidth="1.100">
              <path d="M.6 4.500H3L6.500 1v11L3 8.500H.6zM8.500 4.500c1 1 1 3 0 4M10.500 2.800c2 2 2 5.400 0 7.400" />
              <path d="M12.500 1c3 3 3 8 0 11" stroke="#9a9a9a" />
            </svg>
          </TrayButton>
          <TrayButton $w={40} aria-label="Language">ENG</TrayButton>
          <Clock>
            10:04 CH
            <br />
            07/05/2017
          </Clock>
          <TrayButton $w={46} aria-label="Notifications">
            <svg width="26" height="32" viewBox="0 -6 26 32">
              <path d="M2 2h16v12H10l-4 4v-4H2z" fill="#fff" />
              <path d="M5 5.500h10M5 8.500h10M5 11.500h6" stroke="#0a0b0e" />
              <circle cx="17.500" cy="17.500" r="7.500" fill="#35373b" stroke="#85878b" />
              <text x="17.500" y="22" textAnchor="middle" fontSize="12" fill="#fff">1</text>
            </svg>
          </TrayButton>
          <ShowDesktop aria-label="Show desktop" />
        </Tray>
      </Taskbar>
    </Desktop>
  );
}
